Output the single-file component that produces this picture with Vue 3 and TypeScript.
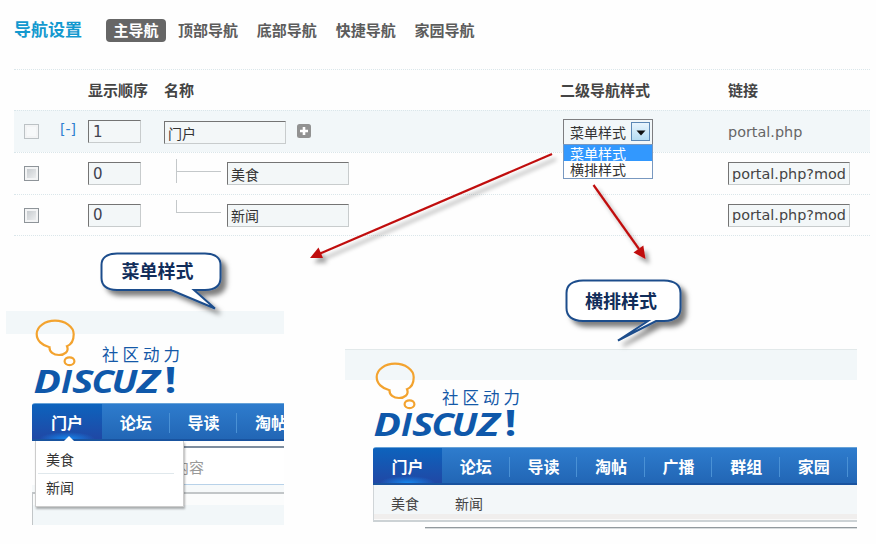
<script setup lang="ts">
import { ref } from 'vue'

interface NavRow {
  order: string
  name: string
  link: string
  level: 'root' | 'branch' | 'last'
}

const tabs: string[] = ['主导航', '顶部导航', '底部导航', '快捷导航', '家园导航']
const activeTab = ref<string>('主导航')

const rows = ref<NavRow[]>([
  { order: '1', name: '门户', link: 'portal.php', level: 'root' },
  { order: '0', name: '美食', link: 'portal.php?mod', level: 'branch' },
  { order: '0', name: '新闻', link: 'portal.php?mod', level: 'last' },
])

const styles: string[] = ['菜单样式', '横排样式']
const chosen = ref<string>('菜单样式')

const previews = [
  { kind: 'menu', items: ['门户', '论坛', '导读', '淘帖'] },
  { kind: 'bar', items: ['门户', '论坛', '导读', '淘帖', '广播', '群组', '家园', ''] },
]
const children: string[] = ['美食', '新闻']
</script>

<template>
  <main class="page">
    <header class="head">
      <h1>导航设置</h1>
      <nav class="tabs">
        <a v-for="t in tabs" :key="t" :class="{ active: t === activeTab }" @click="activeTab = t">{{ t }}</a>
      </nav>
    </header>

    <section class="table">
      <div class="row titles">
        <span></span><span></span><span>显示顺序</span><span>名称</span><span class="style-title">二级导航样式</span><span>链接</span>
      </div>
      <div v-for="(r, i) in rows" :key="i" class="row" :class="r.level">
        <span class="check"></span>
        <span class="fold">{{ r.level === 'root' ? '[-]' : '' }}</span>
        <input v-model="r.order" class="field order" />
        <div class="name">
          <span v-if="r.level !== 'root'" class="tree"></span>
          <input v-model="r.name" class="field title" />
          <svg v-if="r.level === 'root'" class="plus" width="14" height="14" viewBox="0 0 14 14">
            <rect width="14" height="14" rx="2.5" fill="#929292" />
            <path d="M7 3v8M3 7h8" stroke="#fff" stroke-width="2.6" />
          </svg>
        </div>
        <div class="style">
          <div v-if="r.level === 'root'" class="select">
            <span class="value">{{ chosen }}</span>
            <span class="drop"><svg width="10" height="6" viewBox="0 0 10 6"><path d="M0.5 0.5h9L5 5.5z" fill="#111" /></svg></span>
            <ul class="options">
              <li v-for="s in styles" :key="s" :class="{ on: s === chosen }" @click="chosen = s">{{ s }}</li>
            </ul>
          </div>
        </div>
        <span v-if="r.level === 'root'" class="link">{{ r.link }}</span>
        <input v-else v-model="r.link" class="field link" />
      </div>
    </section>

    <section class="previews">
      <article v-for="p in previews" :key="p.kind" class="preview" :class="p.kind">
        <div class="band"></div>
        <svg class="logo" width="160" height="82" viewBox="0 0 160 82">
          <g fill="none" stroke="#f3a32f" stroke-width="2.2">
            <path d="M17.500 32.200C10 30.500 4.700 25.500 4.700 19C4.700 11.500 13 5.700 23 5.700C33 5.700 41.700 11.500 41.700 19.300C41.700 25 39.500 29.500 35 31.200C37.300 36.500 32.500 40 27 40C21.500 40 17.300 37 17.500 32.200Z" />
            <ellipse cx="37.500" cy="46.200" rx="4.900" ry="3.900" />
          </g>
          <text class="slogan" x="70" y="45.700" textLength="78" lengthAdjust="spacing">社区动力</text>
          <g class="brand">
            <text x="1.500" y="77.500" textLength="27.500" lengthAdjust="spacingAndGlyphs">D</text>
            <text x="29" y="77.500" textLength="11" lengthAdjust="spacingAndGlyphs">I</text>
            <text x="40" y="77.500" textLength="21.500" lengthAdjust="spacingAndGlyphs">S</text>
            <text x="59.500" y="77.500" textLength="22.500" lengthAdjust="spacingAndGlyphs">C</text>
            <text x="79.500" y="77.500" textLength="26" lengthAdjust="spacingAndGlyphs">U</text>
            <text x="105" y="77.500" textLength="22.500" lengthAdjust="spacingAndGlyphs">Z</text>
            <text class="mark" x="132.500" y="77.500" textLength="12" lengthAdjust="spacingAndGlyphs">!</text>
          </g>
        </svg>
        <nav class="bar-nav">
          <a v-for="(m, i) in p.items" :key="i" :class="{ current: i === 0 }">{{ m }}</a>
        </nav>
        <div v-if="p.kind === 'menu'" class="content">
          <div class="search"><span>内容</span></div>
          <div class="gap"></div>
          <div class="body"></div>
          <ul class="popup">
            <li v-for="c in children" :key="c">{{ c }}</li>
          </ul>
        </div>
        <template v-else>
          <div class="subnav"><span v-for="c in children" :key="c">{{ c }}</span></div>
          <div class="rule"></div>
        </template>
      </article>
    </section>

    <svg class="notes" width="876" height="544" viewBox="0 0 876 544">
      <defs>
        <filter id="soft" x="-20%" y="-20%" width="150%" height="160%">
          <feDropShadow dx="5" dy="5" stdDeviation="2.500" flood-color="#000" flood-opacity="0.500" />
        </filter>
        <filter id="softline" x="-10%" y="-10%" width="130%" height="130%">
          <feDropShadow dx="4" dy="5" stdDeviation="2" flood-color="#000" flood-opacity="0.350" />
        </filter>
      </defs>
      <g filter="url(#softline)" stroke="#c00d0d" fill="#c00d0d">
        <path d="M552 154L319 254" stroke-width="2.200" />
        <path d="M310 258L318.500 247.500L323 258Z" stroke="none" />
        <path d="M593.500 185L639 249" stroke-width="2.200" />
        <path d="M645.500 259L633.500 252.500L643.300 245.500Z" stroke="none" />
      </g>
      <g filter="url(#soft)" fill="#fff" stroke="#1f4e8c" stroke-width="2" stroke-linejoin="miter">
        <path d="M117 253.500H205Q220.500 254 220.500 265V278Q220.500 289.500 205 290H194L215 308.500L171 290H117Q101.500 289.500 101.500 278V265Q101.500 254 117 253.500Z" />
        <path d="M583 280.500H664Q680.500 281 680.500 293V308Q680.500 320.500 664 321H656L618 340.500L648 321H583Q566.500 320.500 566.500 308V293Q566.500 281 583 280.500Z" />
      </g>
      <g class="note-text">
        <text x="121.500" y="278">菜单样式</text>
        <text x="585" y="307.500">横排样式</text>
      </g>
    </svg>
  </main>
</template>

<style>
body { background: #fff; }
</style>

<style scoped>
* { box-sizing: border-box; }
.page {
  position: relative;
  width: 876px;
  height: 544px;
  overflow: hidden;
  background: #fefefe;
  font-family: "DejaVu Sans", "Noto Sans CJK SC", sans-serif;
  color: #444;
}
.head { display: flex; align-items: center; height: 69px; padding: 0 0 9px 14px; }
h1 { margin: 0; width: 92px; font: bold 17px/24px "Noto Sans CJK SC", sans-serif; color: #1399cf; padding-bottom: 2px; }
.tabs { display: flex; gap: 19px; font: bold 15px/22px "Noto Sans CJK SC", sans-serif; color: #5c5c5c; }
.tabs a { margin-right: -0.2px; }
.tabs a.active { width: 60px; height: 23px; margin-right: -7px; text-align: center; border-radius: 4px; background: #666; color: #fff; }

.table { width: 856px; margin-left: 14px; border-bottom: 1px dotted #dae6ea; }
.row {
  display: grid;
  grid-template-columns: 46px 28px 76px 399px 165px 142px;
  align-items: center;
  height: 42px;
  border-top: 1px dotted #dae6ea;
}
.row.titles { height: 41px; font: bold 15px/20px "Noto Sans CJK SC", sans-serif; }
.style-title { margin-left: -3px; }
.row.root { background: #f2f7f9; }
.row.last { height: 41px; }
.check { width: 15px; height: 15px; margin-left: 10px; border: 1px solid #8e9499; background: linear-gradient(135deg, #bfc4c8, #f4f5f6); box-shadow: inset 0 0 0 2px #f3f4f5; }
.root .check { border-color: #bcc2c5; background: #f7f9fa; }
.fold { font-size: 14px; line-height: 16px; color: #2d7fd0; padding: 0 0 5px 0; }
.field {
  height: 23px;
  margin: 0;
  padding: 0 4px;
  border: 1px solid;
  border-color: #747474 #c8cccd #c8cccd #747474;
  border-radius: 0;
  outline: 0;
  background: #f3f7f8;
  color: #444;
  font: 14.4px/21px "DejaVu Sans", "Noto Sans CJK SC", sans-serif;
}
.order { width: 53px; padding-left: 4px; font-size: 15px; color: #3f4350; }
.name { display: flex; align-items: center; }
.title { width: 122px; padding: 0 3px; font: 14px/20px "Noto Sans CJK SC", sans-serif; color: #333; }
.root .title { margin-top: 2px; }
.tree { align-self: stretch; width: 45px; height: 24px; margin: 0 6px 0 12px; background: linear-gradient(#c4c8ca, #c4c8ca) 0 12px / 45px 1px no-repeat, linear-gradient(#c4c8ca, #c4c8ca) 0 0 / 1px 24px no-repeat; transform: translateY(-3px); }
.last .tree { background-size: 45px 1px, 1px 12px; }
.plus { margin: -2px 0 0 11px; }
.select {
  position: relative;
  display: flex;
  align-items: center;
  justify-content: space-between;
  width: 90px;
  height: 26px;
  padding: 0 2px 0 6px;
  border: 1px solid #7d7d80;
  font: 14px/24px "Noto Sans CJK SC", sans-serif;
  color: #333;
}
.drop { display: grid; place-items: center; width: 19px; height: 19px; border: 1px solid #5c88b5; background: linear-gradient(#e8f5fd, #b5dcf3); }
.drop svg { margin-top: 3px; }
.options {
  position: absolute;
  z-index: 2;
  top: 24px;
  left: -1px;
  width: 90px;
  height: 35px;
  margin: 0;
  padding: 0;
  list-style: none;
  border: 1px solid #7898c0;
  background: #fff;
}
.options li { height: 16px; padding-left: 6px; line-height: 17px; }
.options li.on { background: #3298fe; color: #fff; }
.link { font-size: 14.4px; color: #666; }
input.link { width: 122px; padding: 0 2px 0 3px; font-size: 14.4px; color: #444; }

.previews { display: grid; grid-template-columns: 278px 512px; column-gap: 61px; align-items: start; padding-left: 6px; }
.menu { padding-top: 75px; }
.bar { padding-top: 113px; }
.preview { display: flex; flex-direction: column; }
.band { height: 23px; background: #f2f7f9; }
.bar .band { height: 31px; border-top: 1px solid #e2e9ea; }
.logo { flex: none; overflow: visible; }
.menu .logo { margin: -19px 0 6px 26px; }
.bar .logo { margin: -22px 0 7px 27px; }
.slogan { font: 16.5px "Noto Sans CJK SC", sans-serif; fill: #1459a8; }
.brand { font: italic bold 32.5px "Open Sans", sans-serif; fill: #0f58aa; }
.mark { font-style: normal; font-size: 35px; }
.bar-nav {
  display: flex;
  flex: none;
  height: 38px;
  margin-left: 26px;
  overflow: hidden;
  border-top: 1px solid #67a2d8;
  border-bottom: 2px solid #19539f;
  border-top-left-radius: 3px;
  background: linear-gradient(#2e7ccd, #2266b5);
  color: #fff;
  font: bold 16px/36px "Noto Sans CJK SC", sans-serif;
}
.bar .bar-nav { margin-left: 28px; }
.bar-nav a { flex: none; width: 67.6px; text-align: center; background: linear-gradient(#4a91d5, #4a91d5) 100% 9px / 1px 20px no-repeat; }
.bar-nav a.current { width: 70px; background: radial-gradient(ellipse 28px 7px at 50% 100%, #1688ef, transparent), linear-gradient(#0d63bd, #2048a5); }
.bar .bar-nav a.current { width: 69px; }

.content { position: relative; margin-left: 26px; height: 84px; padding-top: 5px; }
.search { height: 39px; border-top: 2px solid #7e8d9e; border-bottom: 1px solid #b8d2e9; margin-left: 4px; padding-left: 138px; font: 15px/37px "Noto Sans CJK SC", sans-serif; color: #999; background: #fff; }
.gap { height: 7px; background: #f6f9fa; }
.body { height: 33px; border: 1px solid #c2c6c8; border-width: 2px 0 0 1px; background: linear-gradient(#fbfcfc 11px, #f2f7f9 11px); }
.popup {
  position: absolute;
  top: 0;
  left: 3px;
  width: 149px;
  height: 66px;
  margin: 0;
  padding: 5px 9px 0 2px;
  list-style: none;
  background: #fff;
  border: 1px solid #ccc;
  border-top: 0;
  box-shadow: 1px 2px 2px rgba(0, 0, 0, 0.3);
  font: 14px/27px "Noto Sans CJK SC", sans-serif;
  color: #333;
}
.popup::before { content: ""; position: absolute; top: -5px; left: 28px; border: 5px solid transparent; border-top: 0; border-bottom-color: #fff; }
.popup li { padding-left: 8px; height: 28px; }
.popup li:first-child { border-bottom: 1px solid #e0e8ec; }
.subnav { display: flex; gap: 36px; height: 37px; margin-left: 28px; padding-left: 17px; border-left: 1px solid #d0d5d8; border-bottom: 2px solid #ccd2d5; background: linear-gradient(#f3f7f9 29px, #f0eeed 29px, #f0eeed 34px, #fafafa 34px); font: 14px/36px "Noto Sans CJK SC", sans-serif; color: #444; }
.rule { height: 1px; margin: 5px 0 0 80px; background: #92999d; box-shadow: 0 1px #d8dcde; }

.notes { position: absolute; inset: 0; pointer-events: none; }
.note-text { font: bold 18px "Noto Sans CJK SC", sans-serif; fill: #112d5a; }
</style>
